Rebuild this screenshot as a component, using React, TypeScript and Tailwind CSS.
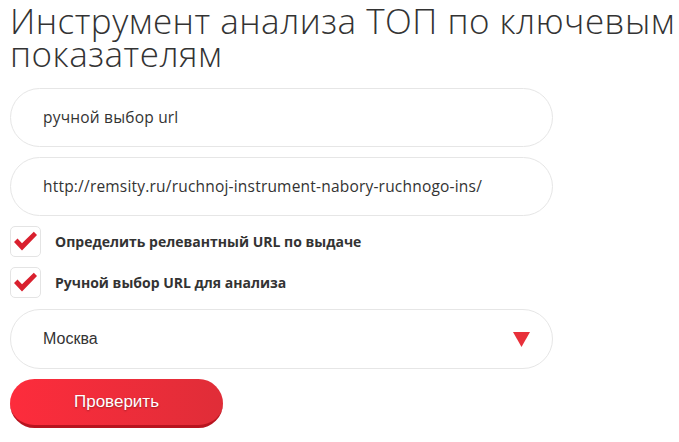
import React from "react";

const CheckRow = ({ label }: { label: string }) => (
  <label className="flex items-center gap-[14px] h-[31px]">
    <span className="w-[31px] h-[31px] rounded-[5px] border border-[#e4e4e4] bg-white flex items-center justify-center">
      <svg width="25" height="21" viewBox="0 0 25 21">
        <path d="M1 11 L4.5 7.6 L9 12.2 L20.8 0.8 L24 4 L9 19.5 Z" fill="#d9202e" />
      </svg>
    </span>
    <span className="text-[14px] font-bold text-[#333]">{label}</span>
  </label>
);

export default function App() {
  return (
    <div className="w-[679px] h-[442px] bg-white pl-[10px] pt-[4px] font-['Open_Sans',sans-serif]">
      <h1 className="text-[35px] leading-[33px] font-light text-[#333] tracking-[0.5px] whitespace-nowrap">
        Инструмент анализа ТОП по ключевым
        <br />
        показателям
      </h1>

      <div className="flex flex-col gap-[10px] mt-[18px] w-[543px]">
        <div className="h-[59px] rounded-full border border-[#e6e6e6] flex items-center pl-[32px] text-[15.5px] tracking-[0.2px] text-[#333]">
          ручной выбор url
        </div>
        <div className="h-[59px] rounded-full border border-[#e6e6e6] flex items-center pl-[32px] text-[15.5px] tracking-[0.2px] text-[#333]">
          http://remsity.ru/ruchnoj-instrument-nabory-ruchnogo-ins/
        </div>
      </div>

      <div className="flex flex-col gap-[10px] mt-[10px]">
        <CheckRow label="Определить релевантный URL по выдаче" />
        <CheckRow label="Ручной выбор URL для анализа" />
      </div>

      <div className="mt-[11px] w-[543px] h-[60px] rounded-full border border-[#e6e6e6] flex items-center justify-between pl-[32px] pr-[22px] font-['Liberation_Sans',Arial,sans-serif] text-[16px] text-[#333]">
        <span>Москва</span>
        <svg width="17" height="15" viewBox="0 0 17 15">
          <path d="M0 0 H17 L8.5 15 Z" fill="#e8303a" />
        </svg>
      </div>

      <button className="mt-[10px] w-[213px] h-[49px] rounded-full bg-gradient-to-r from-[#fd2c3c] to-[#e02d38] border-b-[3px] border-[#b8141f] text-white font-['Liberation_Sans',Arial,sans-serif] text-[17px] [text-shadow:0_1px_2px_rgba(0,0,0,0.35)]">
        Проверить
      </button>
    </div>
  );
}
